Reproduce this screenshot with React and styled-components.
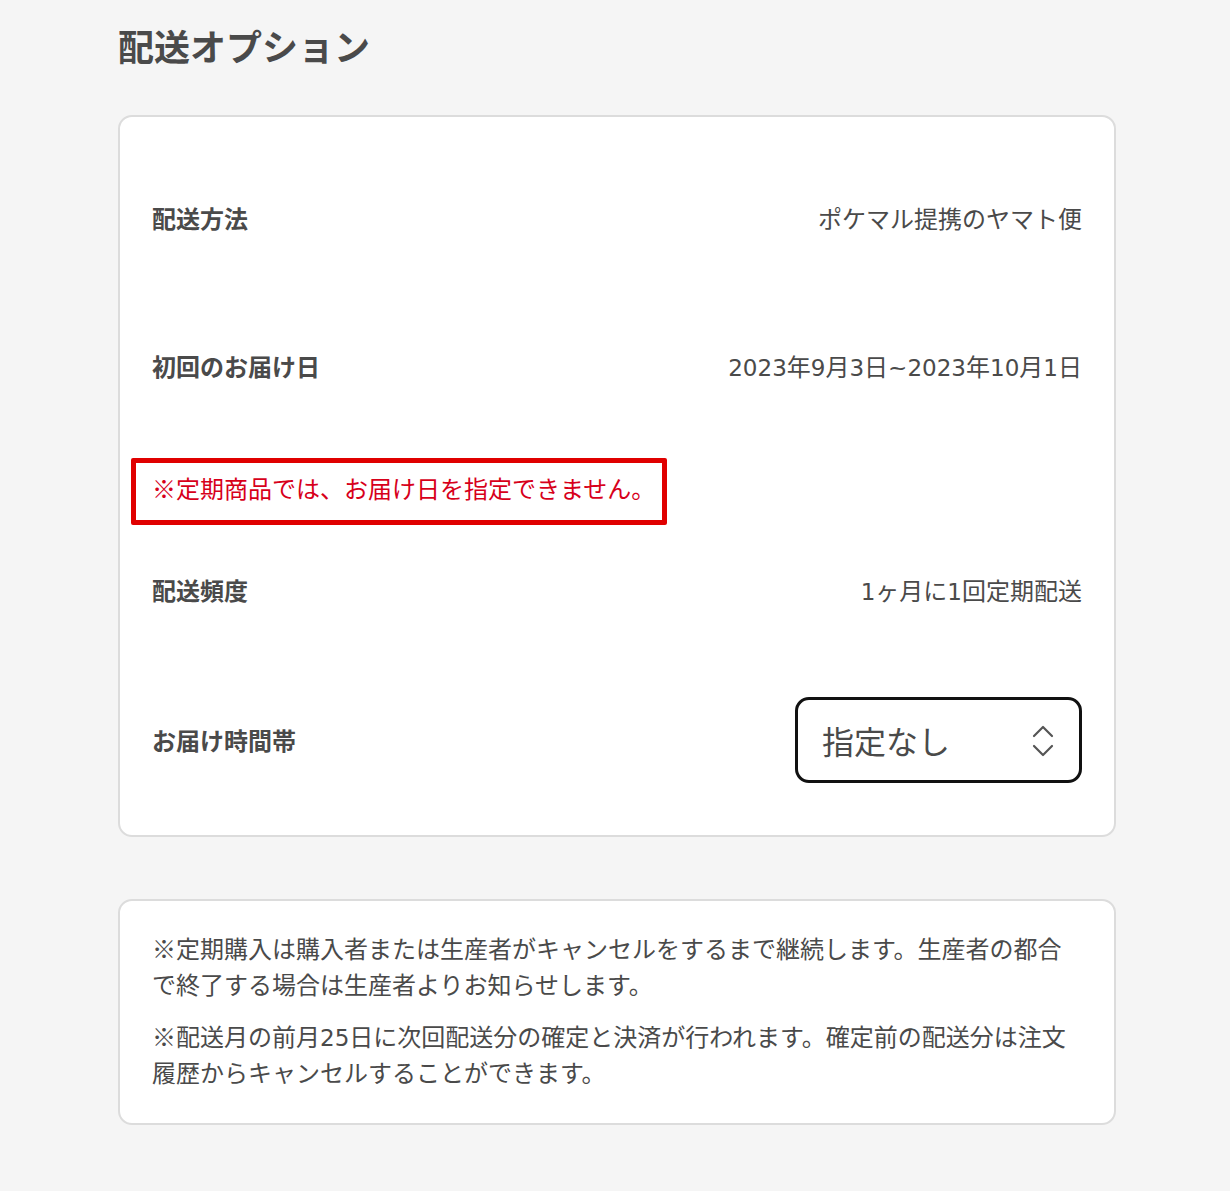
import React from "react";
import styled, { createGlobalStyle } from "styled-components";

const GlobalStyle = createGlobalStyle`
  html, body {
    margin: 0;
    padding: 0;
    background: #f5f5f5;
  }
  body {
    font-family: "Noto Sans CJK JP", "Noto Sans", sans-serif;
    color: #4a4a4a;
  }
  * { box-sizing: border-box; }
`;

const Page = styled.div`
  width: 998px;
  margin-left: 118px;
  padding-bottom: 64px;
`;

const Title = styled.h1`
  margin: 18px 0 43px;
  font-size: 36px;
  line-height: 54px;
  font-weight: 700;
  color: #4a4a4a;
  letter-spacing: 0;
`;

const Card = styled.section`
  background: #fff;
  border: 2px solid #dcdcdc;
  border-radius: 14px;
  padding: ${(p) => p.$pad};
  & + & {
    margin-top: 62px;
  }
`;

const Row = styled.div`
  display: flex;
  justify-content: space-between;
  align-items: center;
  padding: ${(p) => p.$pad || "56px 0"};
  font-size: 24px;
  line-height: 36px;
`;

const Label = styled.div`
  font-weight: 700;
  color: #4a4a4a;
`;

const Value = styled.div`
  font-weight: 400;
  color: #4a4a4a;
`;

const Num = styled.span`
  font-family: "DejaVu Sans", "Noto Sans CJK JP", sans-serif;
  font-size: 0.96em;
  line-height: 1;
`;

const Notice = styled.div`
  width: 536px;
  margin: 18px 0 0 -21px;
  border: 5px solid #e00000;
  border-radius: 2px;
  padding: 7px 0 14px 16px;
  font-size: 24px;
  line-height: 36px;
  color: #d7001a;
  white-space: nowrap;
`;

const SelectBox = styled.div`
  width: 287px;
  height: 86px;
  border: 3px solid #111;
  border-radius: 14px;
  display: flex;
  align-items: center;
  justify-content: space-between;
  padding: 0 24px 0 24px;
  font-size: 32px;
  color: #4a4a4a;
  background: #fff;
`;

const Chevrons = styled.svg`
  width: 24px;
  height: 40px;
  display: block;
`;

const Para = styled.p`
  margin: 0;
  font-size: 24px;
  line-height: 36px;
  color: #4a4a4a;
  & + & {
    margin-top: 16px;
  }
`;

export default function App() {
  return (
    <>
      <GlobalStyle />
      <Page>
        <Title>配送オプション</Title>
        <Card $pad="27px 32px 23px">
          <Row>
            <Label>配送方法</Label>
            <Value>ポケマル提携のヤマト便</Value>
          </Row>
          <Row>
            <Label>初回のお届け日</Label>
            <Value>
              <Num>2023</Num>年<Num>9</Num>月<Num>3</Num>日<Num>~2023</Num>年<Num>10</Num>月<Num>1</Num>日
            </Value>
          </Row>
          <Notice>※定期商品では、お届け日を指定できません。</Notice>
          <Row $pad="47px 0 56px">
            <Label>配送頻度</Label>
            <Value>
              <Num>1</Num>ヶ月に<Num>1</Num>回定期配送
            </Value>
          </Row>
          <Row $pad="33px 0 29px">
            <Label>お届け時間帯</Label>
            <SelectBox>
              <span>指定なし</span>
              <Chevrons viewBox="0 0 24 40" fill="none" stroke="#555" strokeWidth="2.2" strokeLinecap="round" strokeLinejoin="round">
                <polyline points="3,16 12,7 21,16" />
                <polyline points="3,26 12,35 21,26" />
              </Chevrons>
            </SelectBox>
          </Row>
        </Card>
        <Card $pad="29px 32px 33px">
          <Para>
            ※定期購入は購入者または生産者がキャンセルをするまで継続します。生産者の都合で終了する場合は生産者よりお知らせします。
          </Para>
          <Para>
            ※配送月の前月<Num>25</Num>日に次回配送分の確定と決済が行われます。確定前の配送分は注文履歴からキャンセルすることができます。
          </Para>
        </Card>
      </Page>
    </>
  );
}
